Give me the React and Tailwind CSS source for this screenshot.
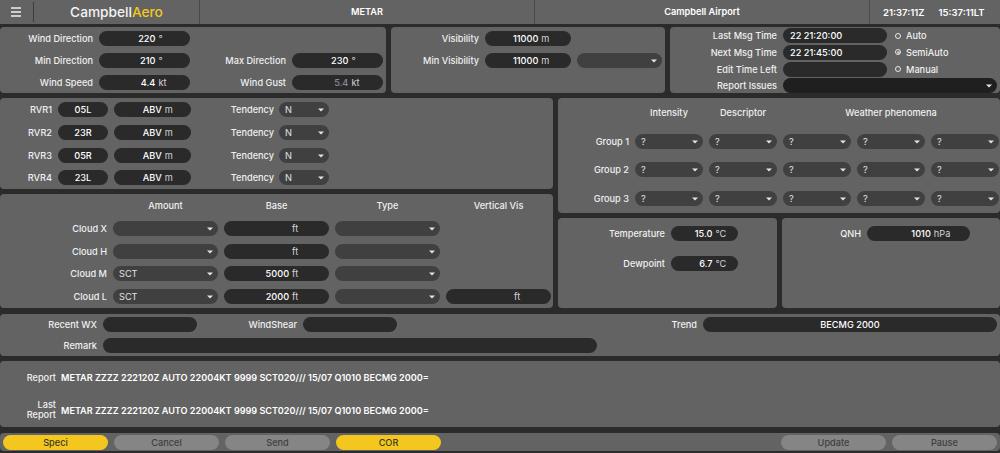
import React from "react";

function Caret() {
  return (
    <svg width="6" height="4" viewBox="0 0 6 4" className="absolute right-[5px] top-[6px]">
      <path d="M0 0.5 L6 0.5 L3 3.5 Z" fill="#e4e4e4" />
    </svg>
  );
}

function Label({ children, className = "" }) {
  return <div className={`text-right text-[#f0f0f0] whitespace-nowrap ${className}`}>{children}</div>;
}

function Pill({ value, unit, dim, className = "" }) {
  return (
    <div className={`h-[15px] rounded-full bg-[#2a2a2a] grid grid-cols-[62%_38%] items-center ${className}`}>
      <span className={`text-right whitespace-nowrap ${dim ? "text-[#8b8b96]" : "text-white"}`}>{value}</span>
      <span className="pl-[3px] text-[#d4d4d8] font-normal whitespace-nowrap">{unit}</span>
    </div>
  );
}

function TextPill({ value, center, className = "" }) {
  return (
    <div className={`h-[15px] rounded-full bg-[#2a2a2a] text-white whitespace-nowrap ${center ? "text-center" : "pl-[7px]"} ${className}`}>
      {value}
    </div>
  );
}

function Select({ value, dark, className = "" }) {
  return (
    <div className={`relative h-[15px] rounded-full ${dark ? "bg-[#1f1f1f]" : "bg-[#404040]"} pl-[6px] text-[#e0e0e0] font-normal ${className}`}>
      {value}
      <Caret />
    </div>
  );
}

function Radio({ label, on }) {
  return (
    <div className="h-[15px] flex items-center gap-[5px] text-[#f0f0f0]">
      <span className="w-[6px] h-[6px] ml-[2px] rounded-full border border-[#e8e8e8] flex items-center justify-center">
        {on && <span className="w-[3px] h-[3px] rounded-full bg-[#c8c8c8]" />}
      </span>
      <span>{label}</span>
    </div>
  );
}

function Btn({ children, yellow }) {
  return (
    <div className={`w-[105px] h-[15px] rounded-full text-center ${yellow ? "bg-[#f3c71e] text-[#3a3a2a]" : "bg-[#858585] text-[#3f3f3f]"}`}>
      {children}
    </div>
  );
}

const panel = "bg-[#636363] rounded-[4px]";
const metar = "METAR ZZZZ 222120Z AUTO 22004KT 9999 SCT020/// 15/07 Q1010 BECMG 2000=";

export default function App() {
  const rvr = [["RVR1", "05L"], ["RVR2", "23R"], ["RVR3", "05R"], ["RVR4", "23L"]];
  const clouds = [
    ["Cloud X", "", ""],
    ["Cloud H", "", ""],
    ["Cloud M", "SCT", "5000"],
    ["Cloud L", "SCT", "2000"],
  ];
  return (
    <div
      className="w-[1000px] h-[453px] overflow-hidden bg-[#2b2b2b] text-[9.2px] leading-[15px] font-medium flex flex-col"
      style={{ fontFamily: '"Inter", "Open Sans", sans-serif' }}
    >
      {/* Header */}
      <div className="h-[24px] shrink-0 bg-[#636363] flex items-center text-white font-semibold">
        <div className="w-[33px] flex justify-center">
          <svg width="11" height="10" viewBox="0 0 11 10">
            <path d="M0 1 H10 M0 5 H10 M0 9 H10" stroke="#f2f2f2" strokeWidth="1.5" />
          </svg>
        </div>
        <div className="w-[166px] h-[20px] border-l border-[#3c3c3c] text-center text-[13.7px] font-medium leading-[20px] text-[#f4f4f4]">
          Campbell<span className="text-[#f3c71e]">Aero</span>
        </div>
        <div className="w-[335px] h-full border-l border-[#4a4a4a] text-center leading-[24px]">METAR</div>
        <div className="w-[335px] h-full border-l border-[#4a4a4a] text-center leading-[24px]">Campbell Airport</div>
        <div className="flex-1 h-full border-l border-[#4a4a4a] flex items-center gap-[14px] pl-[13px] text-[9.5px]">
          <span>21:37:11Z</span>
          <span>15:37:11LT</span>
        </div>
      </div>

      {/* Row 1 */}
      <div className="mt-[3px] h-[66px] shrink-0 flex gap-[5px]">
        <div className={`${panel} w-[386px] pt-[4px] grid grid-cols-[93px_91px_90px_91px] gap-x-[6px] auto-rows-[15px] gap-y-[7px] items-center`}>
          <Label>Wind Direction</Label>
          <Pill value="220" unit="°" />
          <div className="col-span-2" />
          <Label>Min Direction</Label>
          <Pill value="210" unit="°" />
          <Label>Max Direction</Label>
          <Pill value="230" unit="°" />
          <Label>Wind Speed</Label>
          <Pill value="4.4" unit="kt" />
          <Label>Wind Gust</Label>
          <Pill value="5.4" unit="kt" dim />
        </div>
        <div className={`${panel} w-[274px] pt-[4px] grid grid-cols-[88px_86px_85px] gap-x-[6px] auto-rows-[15px] gap-y-[7px] items-center content-start`}>
          <Label>Visibility</Label>
          <Pill value="11000" unit="m" />
          <div />
          <Label>Min Visibility</Label>
          <Pill value="11000" unit="m" />
          <Select />
        </div>
        <div className={`${panel} flex-1 pt-[1px] grid grid-cols-[107px_104px_auto] gap-x-[6px] auto-rows-[15px] gap-y-[1.8px] items-center content-start`}>
          <Label>Last Msg Time</Label>
          <TextPill value="22 21:20:00" />
          <Radio label="Auto" />
          <Label>Next Msg Time</Label>
          <TextPill value="22 21:45:00" />
          <Radio label="SemiAuto" on />
          <Label>Edit Time Left</Label>
          <TextPill value="" />
          <Radio label="Manual" />
          <Label>Report Issues</Label>
          <Select dark className="col-span-2 mr-[3px] h-[13px]" />
        </div>
      </div>

      {/* Row 2 */}
      <div className="mt-[5px] h-[210px] shrink-0 flex gap-[5px]">
        <div className="w-[553px] flex flex-col gap-[5px]">
          <div className={`${panel} h-[91px] pt-[4px] flex flex-col gap-[7.8px]`}>
            {rvr.map(([l, r]) => (
              <div key={l} className="h-[15px] flex items-center">
                <Label className="w-[52px]">{l}</Label>
                <TextPill value={r} center className="ml-[6px] w-[50px]" />
                <Pill value="ABV" unit="m" className="ml-[6px] w-[77px]" />
                <Label className="w-[83px]">Tendency</Label>
                <Select value="N" className="ml-[5px] w-[50px]" />
              </div>
            ))}
          </div>
          <div className={`${panel} flex-1 pt-[4px] grid grid-cols-[107px_105px_105px_105px_105px] gap-x-[6px] auto-rows-[15px] gap-y-[7.8px] items-center content-start`}>
            <div />
            <div className="text-center text-[#f0f0f0]">Amount</div>
            <div className="text-center text-[#f0f0f0]">Base</div>
            <div className="text-center text-[#f0f0f0]">Type</div>
            <div className="text-center text-[#f0f0f0]">Vertical Vis</div>
            {clouds.map(([l, a, b]) => (
              <React.Fragment key={l}>
                <Label>{l}</Label>
                <Select value={a} />
                <Pill value={b} unit="ft" />
                <Select />
                {l === "Cloud L" ? <Pill value="" unit="ft" /> : <div />}
              </React.Fragment>
            ))}
          </div>
        </div>
        <div className="flex-1 flex flex-col gap-[5px]">
          <div className={`${panel} h-[115px] pt-[7px] grid grid-cols-[71px_68px_68px_68px_68px_68px] gap-x-[6px] grid-rows-[15px_15px_15px_15px] gap-y-[13.7px] items-center content-start`}>
            <div />
            <div className="text-center text-[#f0f0f0]">Intensity</div>
            <div className="text-center text-[#f0f0f0]">Descriptor</div>
            <div className="col-span-3 text-center text-[#f0f0f0]">Weather phenomena</div>
            {["Group 1", "Group 2", "Group 3"].map((g) => (
              <React.Fragment key={g}>
                <Label>{g}</Label>
                <Select value="?" />
                <Select value="?" />
                <Select value="?" />
                <Select value="?" />
                <Select value="?" />
              </React.Fragment>
            ))}
          </div>
          <div className="flex-1 flex gap-[5px]">
            <div className={`${panel} w-[219px] pt-[8px] grid grid-cols-[107px_67px] gap-x-[6px] auto-rows-[15px] gap-y-[15px] items-center content-start`}>
              <Label>Temperature</Label>
              <Pill value="15.0" unit="°C" />
              <Label>Dewpoint</Label>
              <Pill value="6.7" unit="°C" />
            </div>
            <div className={`${panel} flex-1 pt-[8px] flex items-start`}>
              <Label className="w-[79px]">QNH</Label>
              <Pill value="1010" unit="hPa" className="ml-[6px] w-[103px]" />
            </div>
          </div>
        </div>
      </div>

      {/* Row 3 */}
      <div className={`${panel} mt-[6px] h-[42px] shrink-0 pt-[3px] flex flex-col gap-[6px]`}>
        <div className="h-[15px] flex items-center">
          <Label className="w-[97px]">Recent WX</Label>
          <TextPill value="" className="ml-[6px] w-[94px]" />
          <Label className="w-[100px]">WindShear</Label>
          <TextPill value="" className="ml-[6px] w-[94px]" />
          <Label className="w-[300px]">Trend</Label>
          <TextPill value="BECMG 2000" center className="ml-[6px] w-[294px]" />
        </div>
        <div className="h-[15px] flex items-center">
          <Label className="w-[97px]">Remark</Label>
          <TextPill value="" className="ml-[6px] w-[494px]" />
        </div>
      </div>

      {/* Row 4 */}
      <div className={`${panel} mt-[5px] h-[66px] shrink-0 pt-[11px]`}>
        <div className="flex items-center h-[11px]">
          <Label className="w-[56px]">Report</Label>
          <div className="ml-[5px] text-white font-semibold whitespace-nowrap text-[9.1px]">{metar}</div>
        </div>
        <div className="flex items-center mt-[17px]">
          <Label className="w-[56px] whitespace-normal leading-[10px]">Last<br />Report</Label>
          <div className="ml-[5px] text-white font-semibold whitespace-nowrap text-[9.1px]">{metar}</div>
        </div>
      </div>

      {/* Row 5 */}
      <div className={`${panel} mt-[6px] h-[18px] shrink-0 px-[3px] flex items-center gap-[6px]`}>
        <Btn yellow>Speci</Btn>
        <Btn>Cancel</Btn>
        <Btn>Send</Btn>
        <Btn yellow>COR</Btn>
        <div className="flex-1" />
        <Btn>Update</Btn>
        <Btn>Pause</Btn>
      </div>
    </div>
  );
}
